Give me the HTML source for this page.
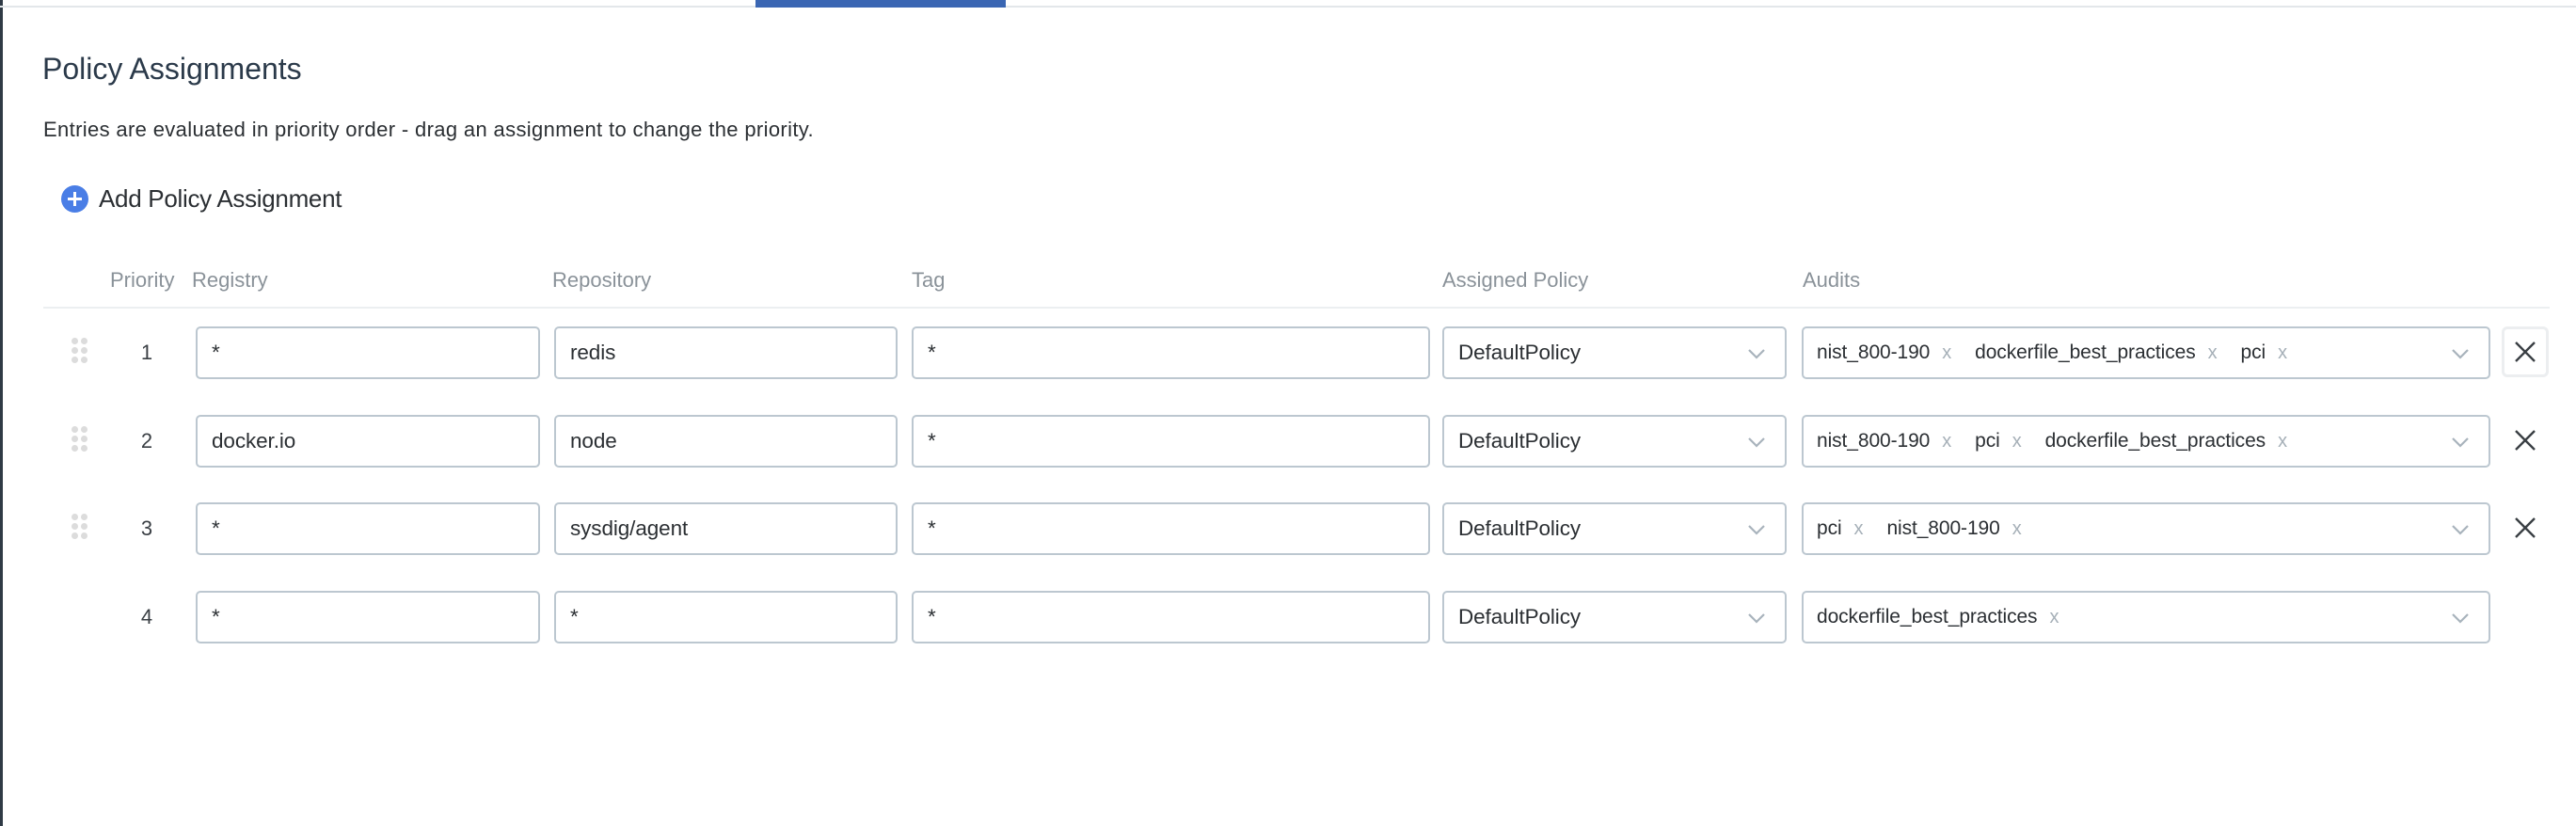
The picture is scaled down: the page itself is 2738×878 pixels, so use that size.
<!DOCTYPE html>
<html><head><meta charset="utf-8"><style>
*{margin:0;padding:0;box-sizing:border-box}
body{width:2738px;height:878px;background:#fff;position:relative;overflow:hidden;font-family:"Liberation Sans",sans-serif;color:#2b2f33}
.a{position:absolute}
.in{position:absolute;height:56px;border:2px solid #bcc7d0;border-radius:5px;background:#fff;font-size:22.5px;color:#2b2f33;padding-left:15px;line-height:52px;white-space:nowrap;letter-spacing:-0.1px}
.chev{position:absolute;right:18px;top:15px;width:24px;height:24px}
.h{position:absolute;top:285px;font-size:22px;color:#8a9299}
.num{position:absolute;width:30px;text-align:center;font-size:22px;color:#3a3f44}
.dots{position:absolute;width:18px;height:28px}
.dots i{position:absolute;width:7px;height:7px;border-radius:50%;background:#dcdcdc}
.x{color:#a6b0b8;margin:0 25px 0 13px;font-size:20px}
.del{position:absolute;width:50px;height:54px;font-size:34px;text-align:center;line-height:52px;color:#3a3f44}
</style></head><body>
<div class="a" style="left:0;top:0;width:3px;height:878px;background:#2f3a45"></div>
<div class="a" style="left:0;top:6px;width:2738px;height:2px;background:#e3e7ea"></div>
<div class="a" style="left:803px;top:0;width:266px;height:8px;background:#3a66b3"></div>
<div class="a" style="left:45px;top:55px;font-size:32px;color:#2b3a4a;letter-spacing:0px">Policy Assignments</div>
<div class="a" style="left:46px;top:125px;font-size:22px;color:#2b2f33;letter-spacing:0.35px">Entries are evaluated in priority order - drag an assignment to change the priority.</div>
<div class="a" style="left:65px;top:197px;width:29px;height:29px;border-radius:50%;background:#4a7ee6"><div class="a" style="left:7px;top:13px;width:15px;height:3px;background:#fff"></div><div class="a" style="left:13px;top:7px;width:3px;height:15px;background:#fff"></div></div>
<div class="a" style="left:105px;top:196px;font-size:26px;color:#2b2f33;letter-spacing:-0.3px">Add Policy Assignment</div>
<div class="h" style="left:117px">Priority</div>
<div class="h" style="left:204px">Registry</div>
<div class="h" style="left:587px">Repository</div>
<div class="h" style="left:969px">Tag</div>
<div class="h" style="left:1533px">Assigned Policy</div>
<div class="h" style="left:1916px">Audits</div>
<div class="a" style="left:46px;top:326px;width:2664px;height:2px;background:#eceff1"></div>

<script>
var rows=[
["*","redis","*",'nist_800-190<span class="x">x</span>dockerfile_best_practices<span class="x">x</span>pci<span class="x">x</span>',1,1],
["docker.io","node","*",'nist_800-190<span class="x">x</span>pci<span class="x">x</span>dockerfile_best_practices<span class="x">x</span>',1,0],
["*","sysdig/agent","*",'pci<span class="x">x</span>nist_800-190<span class="x">x</span>',1,0],
["*","*","*",'dockerfile_best_practices<span class="x">x</span>',0,0]];
var chev='<svg class="chev" viewBox="0 0 24 24"><path d="M4 8 L12 16 L20 8" fill="none" stroke="#a8b3bc" stroke-width="2.2"/></svg>';
var h='';
rows.forEach(function(r,i){
 var y=347+i*93.5;
 if(r[4]) h+='<div class="dots" style="left:76px;top:'+(y+12)+'px"><i style="left:0;top:0"></i><i style="left:10px;top:0"></i><i style="left:0;top:10px"></i><i style="left:10px;top:10px"></i><i style="left:0;top:20px"></i><i style="left:10px;top:20px"></i></div>';
 h+='<div class="num" style="left:141px;top:'+(y+15)+'px">'+(i+1)+'</div>';
 h+='<div class="in" style="left:208px;top:'+y+'px;width:366px">'+r[0]+'</div>';
 h+='<div class="in" style="left:589px;top:'+y+'px;width:365px">'+r[1]+'</div>';
 h+='<div class="in" style="left:969px;top:'+y+'px;width:551px">'+r[2]+'</div>';
 h+='<div class="in" style="left:1533px;top:'+y+'px;width:366px">DefaultPolicy'+chev+'</div>';
 h+='<div class="in" style="left:1915px;top:'+y+'px;width:732px;font-size:21px;padding-left:14px">'+r[3]+chev+'</div>';
 if(i<3) h+='<div class="del" style="left:2659px;top:'+y+'px;'+(r[5]?'border:3px solid #eceef0;border-radius:6px;line-height:48px':'')+'"><svg width="24" height="24" viewBox="0 0 24 24" style="margin-top:'+(r[5]?12:15)+'px"><path d="M2 2 L22 22 M22 2 L2 22" stroke="#3a3f44" stroke-width="2.4"/></svg></div>';
});
document.write(h);
</script>
</body></html>
